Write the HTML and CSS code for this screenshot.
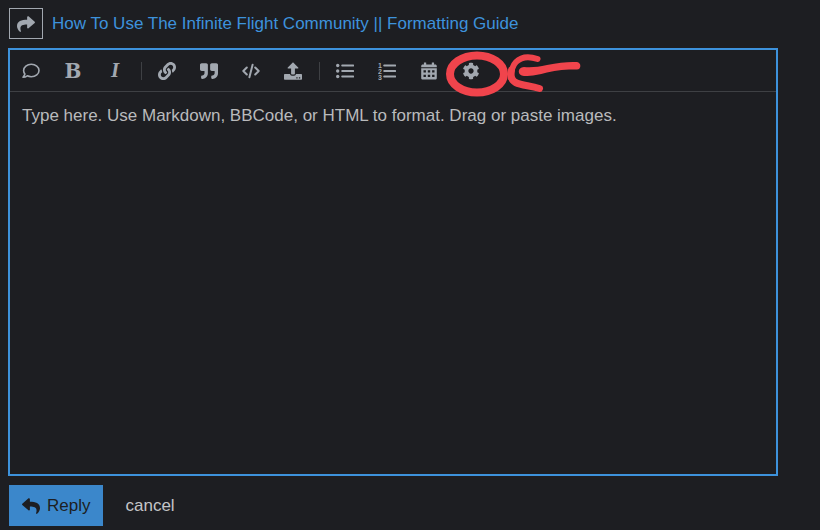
FILE: index.html
```
<!DOCTYPE html>
<html lang="en">
<head>
<meta charset="UTF-8">
<meta name="viewport" content="width=device-width, initial-scale=1.0">
<title>Reply</title>
<link rel="stylesheet" href="styles.css">
</head>
<body>

<div class="composer">

    <!-- Topic being replied to -->
    <div class="reply-to">
        <button class="share-btn" type="button" aria-label="Reply options">
            <svg class="icon" viewBox="0 0 512 512"><path d="M503.691 189.836L327.687 37.851C312.281 24.546 288 35.347 288 56.015v80.053C127.371 137.907 0 170.1 0 322.326c0 61.441 39.581 122.309 83.333 154.132 13.653 9.931 33.111-2.533 28.077-18.631C66.066 312.814 132.917 274.316 288 272.085V360c0 20.7 24.3 31.453 39.687 18.164l176.004-152c11.071-9.562 11.086-26.753 0-36.328z"/></svg>
        </button>
        <a class="topic-link" href="#">How To Use The Infinite Flight Community || Formatting Guide</a>
    </div>

    <!-- Editor -->
    <div class="editor">
        <div class="toolbar">
            <button class="tool" type="button" aria-label="Quote whole post">
                <svg class="icon" viewBox="0 0 18 18"><path class="line thin" d="M9.300 2.300c4.300 0 7.700 2.700 7.700 6.200s-3.400 6.200-7.700 6.200c-1.500 0-2.900-.3-4-.9-1.200.9-2.700 1.400-4.300 1.400 1-1 1.700-2.100 1.900-3.200C2.100 11 1.600 9.800 1.600 8.500c0-3.500 3.400-6.200 7.700-6.200z"/></svg>
            </button>
            <button class="tool glyph" type="button" aria-label="Bold">B</button>
            <button class="tool glyph italic" type="button" aria-label="Italic">I</button>
            <span class="separator"></span>
            <button class="tool" type="button" aria-label="Link">
                <svg class="icon" viewBox="0 0 512 512"><path d="M326.612 185.391c59.747 59.809 58.927 155.698.36 214.59-.11.12-.24.25-.36.37l-67.2 67.2c-59.27 59.27-155.699 59.262-214.96 0-59.27-59.26-59.27-155.7 0-214.96l37.106-37.106c9.84-9.84 26.786-3.3 27.294 10.606.648 17.722 3.826 35.527 9.69 52.721 1.986 5.822.567 12.262-3.783 16.612l-13.087 13.087c-28.026 28.026-28.905 73.66-1.155 101.96 28.024 28.579 74.086 28.749 102.325.51l67.2-67.19c28.191-28.191 28.073-73.757 0-101.83-3.701-3.694-7.429-6.564-10.341-8.569a16.037 16.037 0 0 1-6.947-12.606c-.396-10.567 3.348-21.456 11.698-29.806l21.054-21.055c5.521-5.521 14.182-6.199 20.584-1.731a152.482 152.482 0 0 1 20.522 17.197zM467.547 44.449c-59.261-59.262-155.69-59.27-214.96 0l-67.2 67.2c-.12.12-.25.25-.36.37-58.566 58.892-59.387 154.781.36 214.59a152.454 152.454 0 0 0 20.521 17.196c6.402 4.468 15.064 3.789 20.584-1.731l21.054-21.055c8.35-8.35 12.094-19.239 11.698-29.806a16.037 16.037 0 0 0-6.947-12.606c-2.912-2.005-6.64-4.875-10.341-8.569-28.073-28.073-28.191-73.639 0-101.83l67.2-67.19c28.239-28.239 74.3-28.069 102.325.51 27.75 28.3 26.872 73.934-1.155 101.96l-13.087 13.087c-4.35 4.35-5.769 10.79-3.783 16.612 5.864 17.194 9.042 34.999 9.69 52.721.509 13.906 17.454 20.446 27.294 10.606l37.106-37.106c59.271-59.259 59.271-155.699.001-214.959z"/></svg>
            </button>
            <button class="tool" type="button" aria-label="Blockquote">
                <svg class="icon" viewBox="0 0 512 512"><path d="M464 32H336c-26.5 0-48 21.5-48 48v128c0 26.5 21.5 48 48 48h80v64c0 35.3-28.7 64-64 64h-8c-13.3 0-24 10.7-24 24v48c0 13.3 10.7 24 24 24h8c88.4 0 160-71.6 160-160V80c0-26.5-21.5-48-48-48zm-288 0H48C21.5 32 0 53.5 0 80v128c0 26.5 21.5 48 48 48h80v64c0 35.3-28.7 64-64 64h-8c-13.3 0-24 10.7-24 24v48c0 13.3 10.7 24 24 24h8c88.4 0 160-71.6 160-160V80c0-26.5-21.5-48-48-48z"/></svg>
            </button>
            <button class="tool" type="button" aria-label="Preformatted text">
                <svg class="icon" viewBox="0 0 18 18"><path class="line" d="M4.800 5.500 1.300 9l3.500 3.500M13.200 5.500 16.700 9l-3.500 3.500M10.600 2.800 7.400 15.200"/></svg>
            </button>
            <button class="tool" type="button" aria-label="Upload">
                <svg class="icon" viewBox="0 0 18 18"><path d="M9 .2 14.200 5.600c.4.5.1 1-.5 1H10.900v5.200c0 .5-.3.8-.8.8H7.900c-.5 0-.8-.3-.8-.8V6.600H4.300c-.6 0-.9-.5-.5-1z"/><path fill-rule="evenodd" d="M.8 12h5.300c.1 1 .8 1.700 1.800 1.700h2.200c1 0 1.700-.7 1.800-1.700h5.300c.5 0 .8.3.8.8v4.100c0 .5-.3.8-.8.8H.8c-.5 0-.8-.3-.8-.8v-4.100c0-.5.3-.8.8-.8zM12.300 15.200h1.300v1.300h-1.300zM14.900 15.200h1.300v1.300h-1.300z"/></svg>
            </button>
            <span class="separator"></span>
            <button class="tool" type="button" aria-label="Bulleted list">
                <svg class="icon" viewBox="0 0 18 18"><circle cx="1.700" cy="3.500" r="1.700"/><circle cx="1.700" cy="9" r="1.700"/><circle cx="1.700" cy="14.500" r="1.700"/><path class="line" d="M6.200 3.500h11M6.200 9h11M6.200 14.500h11"/></svg>
            </button>
            <button class="tool" type="button" aria-label="Numbered list">
                <svg class="icon" viewBox="0 0 18 18"><text class="num" x="0" y="6">1</text><text class="num" x="0" y="12">2</text><text class="num" x="0" y="18">3</text><path class="line" d="M6.200 3.500h11M6.200 9h11M6.200 14.500h11"/></svg>
            </button>
            <button class="tool" type="button" aria-label="Insert date">
                <svg class="icon" viewBox="0 0 18 18"><path d="M4.300.5h1.500c.3 0 .4.1.4.4v1.600h5.600V.9c0-.3.1-.4.4-.4h1.500c.3 0 .4.1.4.4v1.600h1.100c.9 0 1.600.7 1.600 1.600v1.100H1.200V4.100c0-.9.7-1.600 1.600-1.600h1.100V.9c0-.3.1-.4.4-.4z"/><path fill-rule="evenodd" d="M1.200 6.200h15.600v9.700c0 .9-.7 1.600-1.600 1.600H2.800c-.9 0-1.600-.7-1.600-1.600zM3.500 8.300v2.200h2.400V8.300zM7.800 8.300v2.200h2.400V8.300zM12.100 8.300v2.200h2.400V8.300zM3.500 12.700v2.200h2.400v-2.200zM7.800 12.700v2.200h2.400v-2.200zM12.100 12.700v2.200h2.400v-2.200z"/></svg>
            </button>
            <button class="tool marked" type="button" aria-label="Options">
                <svg class="icon" viewBox="-16 -16 544 544"><path d="M487.4 315.7l-42.6-24.6c4.3-23.2 4.3-47 0-70.2l42.6-24.6c4.9-2.8 7.1-8.6 5.5-14-11.1-35.6-30-67.8-54.7-94.6-3.8-4.1-10-5.1-14.8-2.3L380.8 110c-17.9-15.4-38.5-27.3-60.8-35.1V25.8c0-5.6-3.9-10.5-9.4-11.7-36.7-8.2-74.3-7.8-109.2 0-5.5 1.2-9.4 6.1-9.4 11.7V75c-22.2 7.9-42.8 19.8-60.8 35.1L88.7 85.5c-4.9-2.8-11-1.9-14.8 2.3-24.7 26.7-43.6 58.9-54.7 94.6-1.7 5.4.6 11.2 5.5 14L67.3 221c-4.3 23.2-4.3 47 0 70.2l-42.6 24.6c-4.9 2.8-7.1 8.6-5.5 14 11.1 35.6 30 67.8 54.7 94.6 3.8 4.1 10 5.1 14.8 2.3l42.6-24.6c17.9 15.4 38.5 27.3 60.8 35.1v49.2c0 5.6 3.9 10.5 9.4 11.7 36.7 8.2 74.3 7.8 109.2 0 5.5-1.2 9.4-6.1 9.4-11.7v-49.2c22.2-7.9 42.8-19.8 60.8-35.1l42.6 24.6c4.9 2.8 11 1.9 14.8-2.3 24.7-26.7 43.6-58.9 54.7-94.6 1.5-5.5-.7-11.3-5.6-14.1zM256 336c-44.1 0-80-35.9-80-80s35.9-80 80-80 80 35.9 80 80-35.9 80-80 80z"/></svg>
                <!-- Hand-drawn circle and arrow -->
                <svg class="marker" viewBox="0 0 140 50">
                    <ellipse cx="33" cy="24" rx="27" ry="18.500" stroke-width="8"/>
                    <path stroke-width="6" d="M93.500 9C85 6 77 7 72 12c-4 4-5 9-5 16"/>
                    <path stroke-width="7" d="M67.500 20c-1.500 6 0 10 4 12.500 6 3 14 3 24 6"/>
                    <path class="shaft" d="M80 17c8 .5 14 0 23-2 12-2.500 22-3.500 30-3 4.500.5 4.500 7.500 0 7.500-11 0-20 .5-30 3-8 2-14 3.500-23 3.500-7 0-7-9 0-9z"/>
                </svg>
            </button>
        </div>
        <textarea class="input" aria-label="Reply text" placeholder="Type here. Use Markdown, BBCode, or HTML to format. Drag or paste images."></textarea>
    </div>

    <!-- Actions -->
    <div class="actions">
        <button class="reply-btn" type="button">
            <svg class="icon" viewBox="0 0 512 512"><path d="M8.309 189.836L184.313 37.851C199.719 24.546 224 35.347 224 56.015v80.053c160.629 1.839 288 34.032 288 186.258 0 61.441-39.581 122.309-83.333 154.132-13.653 9.931-33.111-2.533-28.077-18.631 45.344-145.012-21.507-183.51-176.59-185.742V360c0 20.7-24.3 31.453-39.687 18.164l-176.004-152c-11.071-9.562-11.086-26.753 0-36.328z"/></svg>
            Reply
        </button>
        <a class="cancel" href="#">cancel</a>
    </div>

</div>

</body>
</html>
```

FILE: styles.css
```
* { box-sizing: border-box; }
body {
    margin: 0;
    background-color: #1d1e22;
    color: #c4c5c7;
    font-family: "Liberation Sans", Arial, sans-serif;
    font-size: 17px;
}
button { font: inherit; margin: 0; padding: 0; border: 0; background: none; }
a { text-decoration: none; }
.icon { width: 18px; height: 18px; fill: currentColor; flex-shrink: 0; }
.line { fill: none; stroke: currentColor; stroke-width: 2; stroke-linecap: round; stroke-linejoin: round; }
.line.thin { stroke-width: 1.6; }

.composer {
    display: flex;
    flex-direction: column;
    height: 100vh;
    padding: 8px 42px 4px 8px;
}

.reply-to { display: flex; align-items: center; gap: 9px; padding: 0 1px 9px; }
.share-btn {
    display: flex;
    align-items: center;
    justify-content: center;
    width: 34px;
    height: 31px;
    border: 1px solid #a2a8b0;
    color: #a2a8b0;
}
.topic-link { color: #3d92dc; }

.editor {
    display: flex;
    flex-direction: column;
    flex: 1;
    border: 2px solid #3d92dc;
}
.toolbar {
    display: flex;
    align-items: center;
    height: 42px;
    border-bottom: 1px solid #3e4044;
    color: #a2a8b0;
}
.tool {
    display: flex;
    align-items: center;
    justify-content: center;
    width: 42px;
    height: 40px;
    color: inherit;
}
.glyph { font: bold 20px "DejaVu Serif", serif; }
.italic { font: italic bold 21px "Liberation Serif", serif; }
.num { font: bold 7px "Liberation Sans", Arial, sans-serif; }
.separator { width: 1px; height: 18px; margin: 0 4px 0 5px; background-color: #3e4044; }

.marked { position: relative; }
.marker {
    position: absolute;
    top: -1px;
    left: -6px;
    width: 140px;
    height: 50px;
    fill: none;
    stroke: #f0444c;
    stroke-linecap: round;
    pointer-events: none;
}
.shaft { fill: #f0444c; stroke: none; }

.input {
    flex: 1;
    width: 100%;
    padding: 14px 12px;
    border: 0;
    outline: 0;
    resize: none;
    background: none;
    color: inherit;
    font: inherit;
    line-height: 20px;
}
.input::placeholder { color: #b9babc; opacity: 1; }

.actions { display: flex; align-items: center; gap: 22px; padding: 9px 1px 0; }
.reply-btn {
    display: flex;
    align-items: center;
    gap: 7px;
    height: 41px;
    padding: 0 13px;
    background-color: #3b87cb;
    color: #1d1e22;
}
.cancel { color: #c4c5c7; }
```
